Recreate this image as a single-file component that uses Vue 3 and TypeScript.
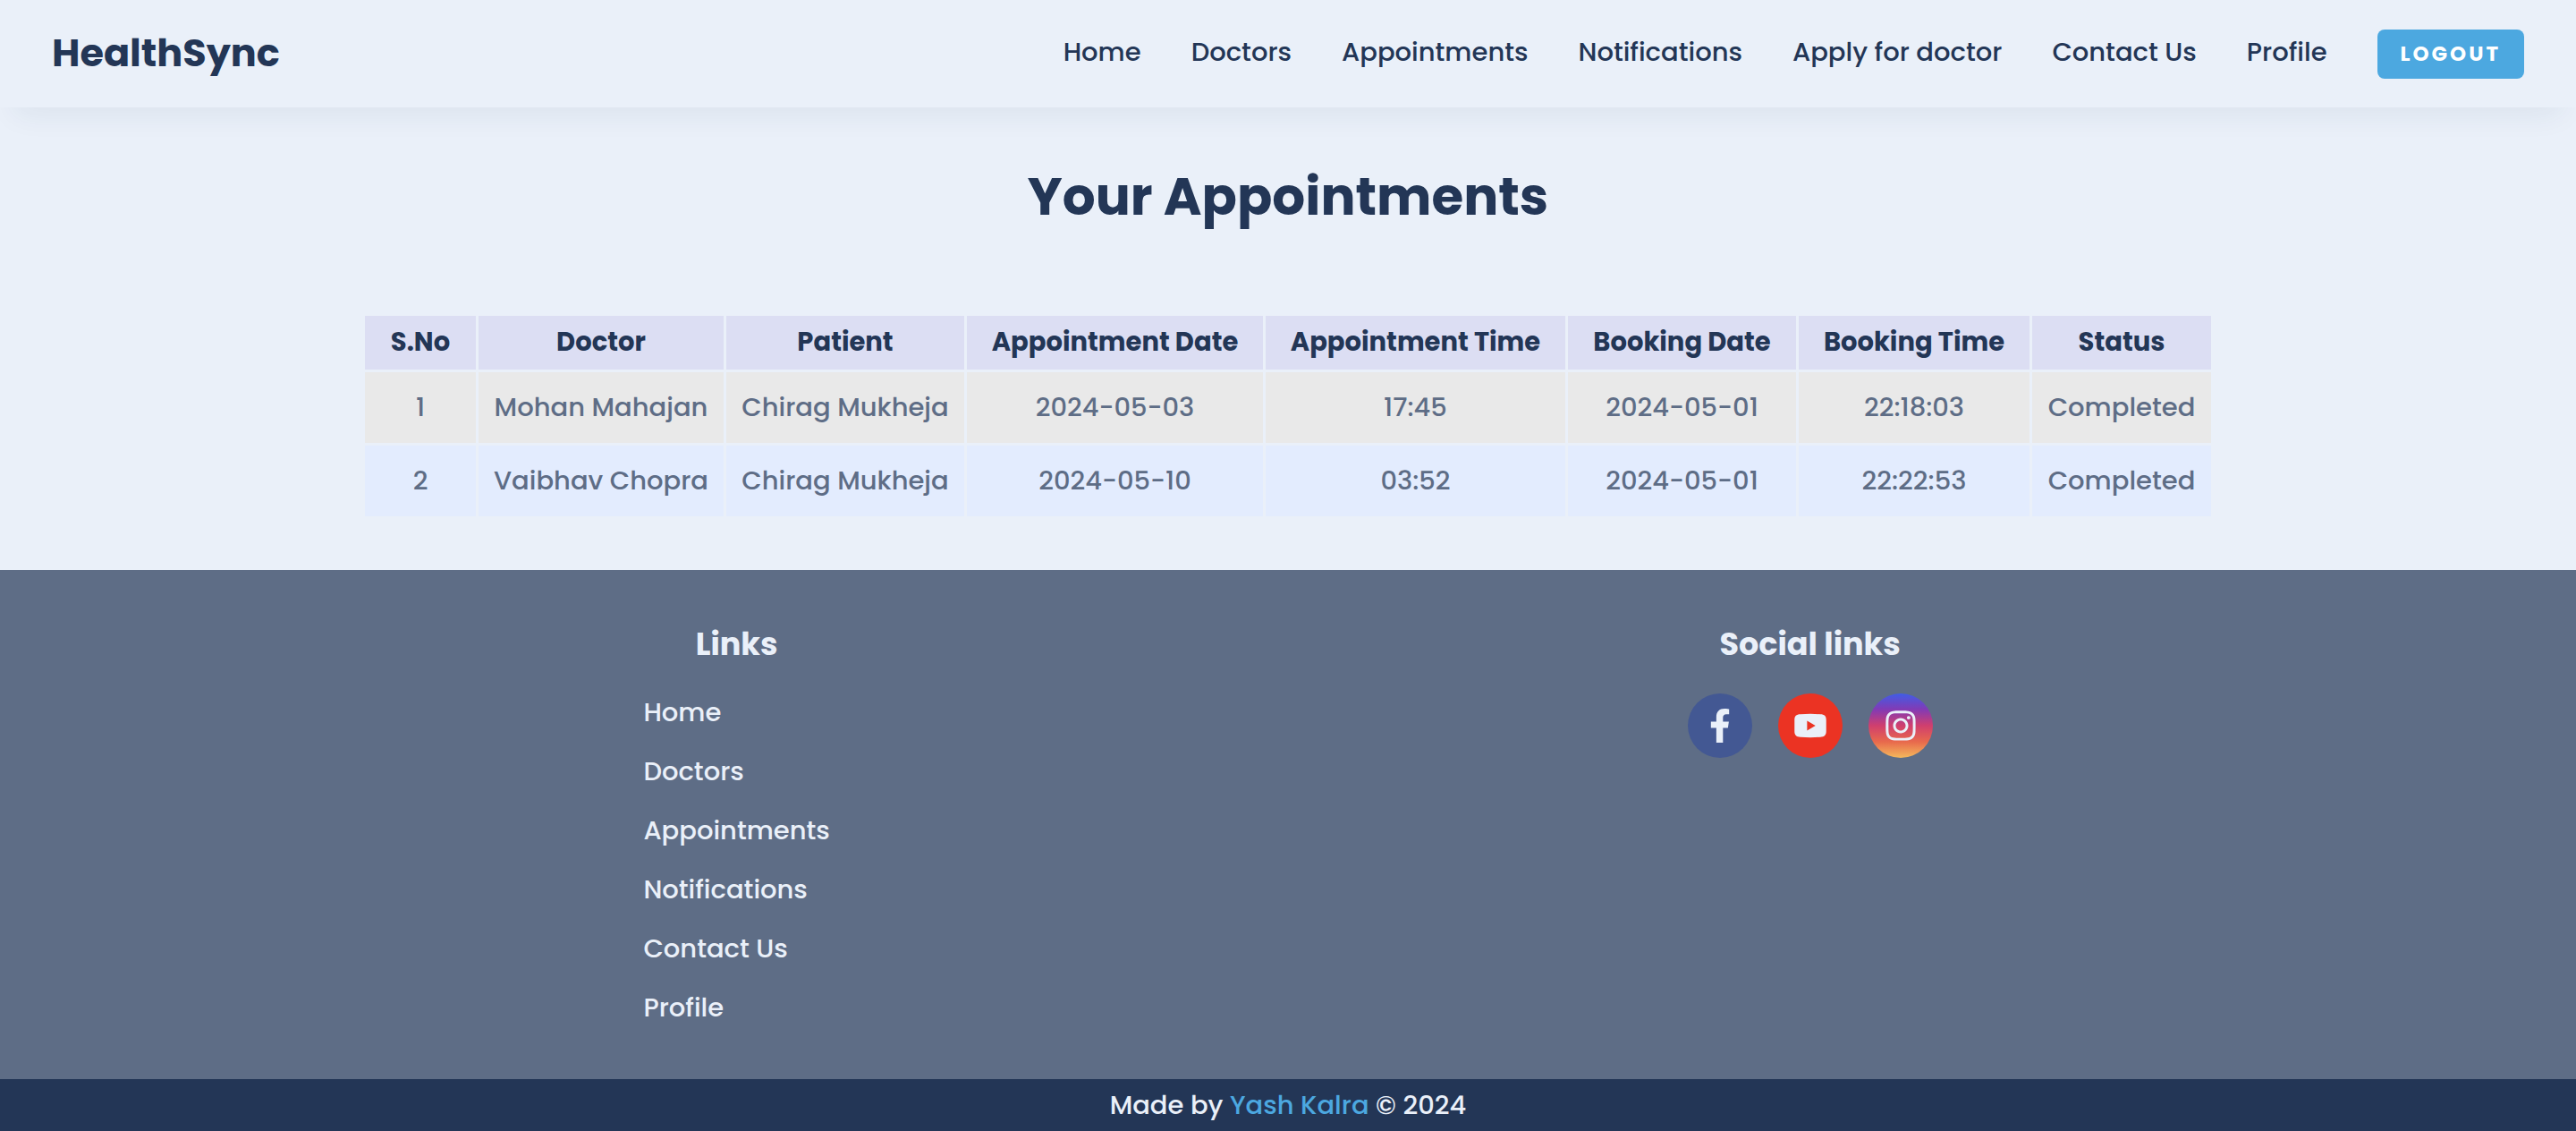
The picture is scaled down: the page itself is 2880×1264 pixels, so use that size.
<script setup lang="ts">
interface Column {
  label: string
  width: number
}

interface Appointment {
  doctor: string
  patient: string
  date: string
  time: string
  bookingDate: string
  bookingTime: string
  status: string
}

const navLinks: string[] = [
  'Home',
  'Doctors',
  'Appointments',
  'Notifications',
  'Apply for doctor',
  'Contact Us',
  'Profile',
]

const footerLinks: string[] = navLinks.filter((link) => link !== 'Apply for doctor')

const columns: Column[] = [
  { label: 'S.No', width: 124 },
  { label: 'Doctor', width: 274 },
  { label: 'Patient', width: 266 },
  { label: 'Appointment Date', width: 331 },
  { label: 'Appointment Time', width: 335 },
  { label: 'Booking Date', width: 255 },
  { label: 'Booking Time', width: 258 },
  { label: 'Status', width: 200 },
]

const appointments: Appointment[] = [
  {
    doctor: 'Mohan Mahajan',
    patient: 'Chirag Mukheja',
    date: '2024-05-03',
    time: '17:45',
    bookingDate: '2024-05-01',
    bookingTime: '22:18:03',
    status: 'Completed',
  },
  {
    doctor: 'Vaibhav Chopra',
    patient: 'Chirag Mukheja',
    date: '2024-05-10',
    time: '03:52',
    bookingDate: '2024-05-01',
    bookingTime: '22:22:53',
    status: 'Completed',
  },
]
</script>

<template>
  <div class="page">
    <header class="header">
      <a href="#" class="logo">HealthSync</a>
      <nav class="nav" aria-label="Main">
        <a v-for="link in navLinks" :key="link" href="#" class="nav-link">{{ link }}</a>
        <button type="button" class="logout">LOGOUT</button>
      </nav>
    </header>

    <main class="main">
      <h1 class="title">Your Appointments</h1>
      <table class="table">
        <colgroup>
          <col v-for="column in columns" :key="column.label" :style="{ width: column.width + 'px' }" />
        </colgroup>
        <thead>
          <tr>
            <th v-for="column in columns" :key="column.label" scope="col">{{ column.label }}</th>
          </tr>
        </thead>
        <tbody>
          <tr v-for="(item, index) in appointments" :key="index">
            <td>{{ index + 1 }}</td>
            <td>{{ item.doctor }}</td>
            <td>{{ item.patient }}</td>
            <td>{{ item.date }}</td>
            <td>{{ item.time }}</td>
            <td>{{ item.bookingDate }}</td>
            <td>{{ item.bookingTime }}</td>
            <td>{{ item.status }}</td>
          </tr>
        </tbody>
      </table>
    </main>

    <footer>
      <div class="footer-columns">
        <section class="footer-column">
          <h2 class="footer-title">Links</h2>
          <ul class="footer-links">
            <li v-for="link in footerLinks" :key="link"><a href="#">{{ link }}</a></li>
          </ul>
        </section>
        <section class="footer-column">
          <h2 class="footer-title">Social links</h2>
          <div class="socials">
            <a href="#" class="social facebook" aria-label="Facebook">
              <svg viewBox="0 0 320 512" width="38" height="38" fill="currentColor" aria-hidden="true">
                <path d="M279.14 288l14.22-92.66h-88.91v-60.13c0-25.35 12.42-50.06 52.24-50.06h40.42V6.26S260.43 0 225.36 0c-73.22 0-121.08 44.38-121.08 124.72v70.62H22.89V288h81.39v224h100.17V288z" />
              </svg>
            </a>
            <a href="#" class="social youtube" aria-label="YouTube">
              <svg viewBox="0 0 24 24" width="38" height="38" fill="currentColor" aria-hidden="true">
                <path fill-rule="evenodd" d="M5 4C2 4 .8 5.400.8 8V16C.8 18.600 2 20 5 20Q12 20.600 19 20C22 20 23.200 18.600 23.200 16V8C23.200 5.400 22 4 19 4Q12 3.400 5 4ZM9.700 8.600V15.400L15.600 12Z" />
              </svg>
            </a>
            <a href="#" class="social instagram" aria-label="Instagram">
              <svg viewBox="0 0 448 512" width="38" height="38" fill="currentColor" aria-hidden="true">
                <path d="M224.1 141c-63.600 0-114.900 51.300-114.900 114.900s51.300 114.900 114.900 114.900S339 319.500 339 255.900 287.700 141 224.100 141zm0 189.600c-41.100 0-74.700-33.500-74.700-74.700s33.500-74.700 74.700-74.700 74.700 33.500 74.700 74.700-33.600 74.700-74.700 74.700zm146.400-194.300c0 14.900-12 26.800-26.800 26.800-14.900 0-26.800-12-26.800-26.800s12-26.800 26.800-26.800 26.800 12 26.800 26.800zm76.100 27.200c-1.700-35.900-9.900-67.700-36.200-93.900-26.200-26.200-58-34.400-93.900-36.200-37-2.100-147.900-2.100-184.900 0-35.800 1.700-67.600 9.900-93.900 36.100s-34.400 58-36.200 93.900c-2.100 37-2.100 147.900 0 184.900 1.700 35.900 9.900 67.700 36.200 93.900s58 34.400 93.900 36.200c37 2.100 147.900 2.100 184.900 0 35.900-1.700 67.700-9.900 93.900-36.200 26.200-26.200 34.400-58 36.200-93.900 2.100-37 2.100-147.800 0-184.800zM398.800 388c-7.800 19.600-22.900 34.700-42.600 42.600-29.500 11.700-99.500 9-132.100 9s-102.700 2.600-132.100-9c-19.600-7.800-34.700-22.900-42.600-42.600-11.700-29.500-9-99.500-9-132.100s-2.600-102.700 9-132.100c7.800-19.600 22.900-34.700 42.600-42.600 29.500-11.700 99.500-9 132.100-9s102.700-2.600 132.100 9c19.600 7.800 34.700 22.900 42.600 42.600 11.700 29.500 9 99.500 9 132.100s2.700 102.700-9 132.100z" />
              </svg>
            </a>
          </div>
        </section>
      </div>
      <div class="credit">Made by <a href="#">Yash Kalra</a> © 2024</div>
    </footer>
  </div>
</template>

<style>
body {
  margin: 0;
  background: #eaf0f9;
}
</style>

<style scoped>
.page {
  color: #233656;
  font-family: Poppins, Inter, sans-serif;
  font-size: 29px;
  font-weight: 500;
  line-height: 42px;
}

a {
  color: inherit;
  text-decoration: none;
}

.header {
  display: flex;
  align-items: center;
  justify-content: space-between;
  box-sizing: border-box;
  height: 120px;
  padding: 0 58px;
  box-shadow: 0 24px 32px -16px rgba(35, 54, 86, 0.07);
}

.logo {
  padding-bottom: 2px;
  font-size: 43px;
  font-weight: 700;
}

.nav {
  display: flex;
  align-items: center;
  gap: 56px;
}

.nav-link {
  padding-bottom: 4px;
}

.logout {
  height: 55px;
  padding: 0 26px;
  border: 0;
  border-radius: 8px;
  background: #4ca8e0;
  color: #fff;
  font-family: inherit;
  font-size: 23px;
  font-weight: 700;
  letter-spacing: 3px;
}

.main {
  display: flex;
  flex-direction: column;
  align-items: center;
  padding: 58px 58px 57px;
}

.title {
  margin: 0;
  font-size: 58px;
  font-weight: 700;
  line-height: 84px;
}

.table {
  margin-top: 88px;
  border-spacing: 3px;
  text-align: center;
  white-space: nowrap;
}

th,
td {
  box-sizing: border-box;
  padding: 0 0 2px;
}

th {
  height: 60px;
  background: #dcdef3;
  font-weight: 700;
}

td {
  height: 79px;
  background: #e9e9e9;
  color: #5e6d86;
}

tbody tr:nth-child(even) td {
  background: #e3ecfe;
}

.footer-columns {
  display: flex;
  justify-content: space-around;
  padding: 58px 240px 59px;
  background: #5e6d86;
  color: #eaf0f9;
}

.footer-column {
  display: flex;
  flex-direction: column;
  align-items: center;
  gap: 30px;
}

.footer-title {
  margin: 0;
  font-size: 35px;
  font-weight: 700;
  line-height: 50px;
}

.footer-links {
  display: flex;
  flex-direction: column;
  gap: 24px;
  margin: 0;
  padding: 0;
  list-style: none;
}

.socials {
  display: flex;
  gap: 29px;
}

.social {
  display: flex;
  align-items: center;
  justify-content: center;
  width: 72px;
  height: 72px;
  border-radius: 50%;
}

.facebook {
  background: #435893;
}

.youtube {
  background: #eb3323;
}

.instagram {
  background: linear-gradient(#405de6, #833ab4 25%, #d03f6e 50%, #e8694c 75%, #f4b95c);
}

.credit {
  padding: 8px 0;
  background: #233656;
  color: #eaf0f9;
  text-align: center;
}

.credit a {
  color: #4ca8e0;
}
</style>
